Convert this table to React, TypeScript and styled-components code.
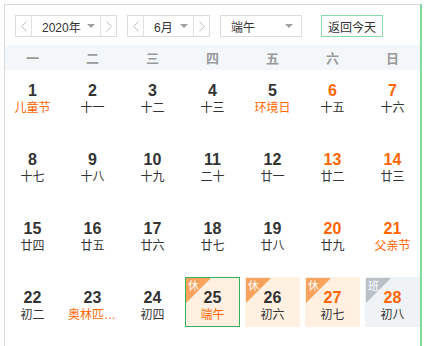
import React from 'react';
import styled, { createGlobalStyle, css } from 'styled-components';

const GlobalStyle = createGlobalStyle`
  body {
    margin: 0;
    background: #fff;
    font-family: "Liberation Sans", "Noto Sans CJK SC", sans-serif;
    color: #333;
  }
`;

type Mark = 'rest' | 'work';

interface Day {
  day: number;
  lunar: string;
  festival?: boolean;
  mark?: Mark;
  selected?: boolean;
}

const weekdays = ['一', '二', '三', '四', '五', '六', '日'];

const days: Day[] = [
  { day: 1, lunar: '儿童节', festival: true },
  { day: 2, lunar: '十一' },
  { day: 3, lunar: '十二' },
  { day: 4, lunar: '十三' },
  { day: 5, lunar: '环境日', festival: true },
  { day: 6, lunar: '十五' },
  { day: 7, lunar: '十六' },
  { day: 8, lunar: '十七' },
  { day: 9, lunar: '十八' },
  { day: 10, lunar: '十九' },
  { day: 11, lunar: '二十' },
  { day: 12, lunar: '廿一' },
  { day: 13, lunar: '廿二' },
  { day: 14, lunar: '廿三' },
  { day: 15, lunar: '廿四' },
  { day: 16, lunar: '廿五' },
  { day: 17, lunar: '廿六' },
  { day: 18, lunar: '廿七' },
  { day: 19, lunar: '廿八' },
  { day: 20, lunar: '廿九' },
  { day: 21, lunar: '父亲节', festival: true },
  { day: 22, lunar: '初二' },
  { day: 23, lunar: '奥林匹克日', festival: true },
  { day: 24, lunar: '初四' },
  { day: 25, lunar: '端午', festival: true, mark: 'rest', selected: true },
  { day: 26, lunar: '初六', mark: 'rest' },
  { day: 27, lunar: '初七', mark: 'rest' },
  { day: 28, lunar: '初八', mark: 'work' },
];

const Frame = styled.div`
  margin: 4px 0 0 4px;
  width: 415px;
  border-top: 1px solid #d9d9d9;
  border-left: 1px solid #d9d9d9;
  border-right: 2px solid #7edb9d;
`;

const Toolbar = styled.div`
  display: flex;
  align-items: flex-start;
  height: 40px;
  box-sizing: border-box;
  padding: 10px 0 0 10px;
  font-size: 12px;
`;

const Stepper = styled.div`
  display: flex;
  height: 22px;
  box-sizing: border-box;
  border: 1px solid #dcdcdc;
  margin-right: 10px;
`;

const ArrowBtn = styled.div<{ $side: 'left' | 'right' }>`
  width: 15px;
  display: flex;
  align-items: center;
  justify-content: center;
  ${(p) => (p.$side === 'left' ? 'border-right: 1px solid #e2e2e2;' : 'border-left: 1px solid #e2e2e2;')}
`;

const Field = styled.div<{ $w: number }>`
  width: ${(p) => p.$w}px;
  display: flex;
  align-items: center;
  justify-content: space-between;
  padding: 0 5px 0 10px;
  box-sizing: border-box;
`;

const Caret = styled.span`
  width: 0;
  height: 0;
  border-left: 4px solid transparent;
  border-right: 4px solid transparent;
  border-top: 4px solid #a0a0a0;
`;

const Select = styled.div`
  width: 82px;
  height: 22px;
  box-sizing: border-box;
  border: 1px solid #dcdcdc;
  display: flex;
  align-items: center;
  justify-content: space-between;
  padding: 0 8px 0 10px;
`;

const TodayButton = styled.div`
  margin-left: 19px;
  height: 22px;
  box-sizing: border-box;
  border: 1px solid #86dca4;
  padding: 0 6px;
  display: flex;
  align-items: center;
`;

const WeekHeader = styled.div`
  display: grid;
  grid-template-columns: repeat(7, 55px);
  column-gap: 5px;
  height: 25px;
  align-items: center;
  justify-items: center;
  background: #f3f7f9;
  color: #9a9a9a;
  font-size: 13px;
  font-weight: 700;
`;

const DayGrid = styled.div`
  display: grid;
  grid-template-columns: repeat(7, 55px);
  grid-auto-rows: 50px;
  column-gap: 5px;
  row-gap: 19px;
  padding-bottom: 19px;
`;

const Cell = styled.div<{ $mark?: Mark; $selected?: boolean }>`
  position: relative;
  box-sizing: border-box;
  border: 1px solid transparent;
  padding-top: 11px;
  text-align: center;
  overflow: hidden;
  ${(p) => p.$mark === 'rest' && css`background: #fff0e1;`}
  ${(p) => p.$mark === 'work' && css`background: #eff3f6;`}
  ${(p) => p.$selected && css`border-color: #34b35c;`}
`;

const Badge = styled.span<{ $mark: Mark }>`
  position: absolute;
  left: 0;
  top: 0;
  width: 25px;
  height: 25px;
  clip-path: polygon(0 0, 100% 0, 0 100%);
  background: ${(p) => (p.$mark === 'rest' ? '#f9a25e' : '#b9c1c8')};
  color: #fff;
  font-size: 11px;
  line-height: 14px;
  padding: 1px 0 0 2px;
  box-sizing: border-box;
  text-align: left;
`;

const Num = styled.div<{ $weekend: boolean }>`
  font-size: 16px;
  font-weight: 700;
  line-height: 18px;
  color: ${(p) => (p.$weekend ? '#ff6600' : '#333')};
`;

const Lunar = styled.div<{ $festival?: boolean }>`
  font-size: 12px;
  line-height: 16px;
  padding: 0 2px;
  white-space: nowrap;
  overflow: hidden;
  text-overflow: ellipsis;
  color: ${(p) => (p.$festival ? '#ff6600' : '#333')};
`;

const Chevron = ({ dir }: { dir: 'left' | 'right' }) => (
  <svg width="6" height="11" viewBox="0 0 6 11">
    <polyline
      points={dir === 'left' ? '5.5,0.5 0.8,5.5 5.5,10.5' : '0.5,0.5 5.2,5.5 0.5,10.5'}
      fill="none"
      stroke="#bdbdbd"
      strokeWidth="1"
    />
  </svg>
);

const App = () => (
  <>
    <GlobalStyle />
    <Frame>
      <Toolbar>
        <Stepper>
          <ArrowBtn $side="left"><Chevron dir="left" /></ArrowBtn>
          <Field $w={68}>2020年<Caret /></Field>
          <ArrowBtn $side="right"><Chevron dir="right" /></ArrowBtn>
        </Stepper>
        <Stepper>
          <ArrowBtn $side="left"><Chevron dir="left" /></ArrowBtn>
          <Field $w={49}>6月<Caret /></Field>
          <ArrowBtn $side="right"><Chevron dir="right" /></ArrowBtn>
        </Stepper>
        <Select>端午<Caret /></Select>
        <TodayButton>返回今天</TodayButton>
      </Toolbar>
      <WeekHeader>
        {weekdays.map((w) => (
          <span key={w}>{w}</span>
        ))}
      </WeekHeader>
      <DayGrid>
        {days.map((d, i) => (
          <Cell key={d.day} $mark={d.mark} $selected={d.selected}>
            {d.mark && <Badge $mark={d.mark}>{d.mark === 'rest' ? '休' : '班'}</Badge>}
            <Num $weekend={i % 7 >= 5}>{d.day}</Num>
            <Lunar $festival={d.festival}>{d.lunar}</Lunar>
          </Cell>
        ))}
      </DayGrid>
    </Frame>
  </>
);

export default App;
